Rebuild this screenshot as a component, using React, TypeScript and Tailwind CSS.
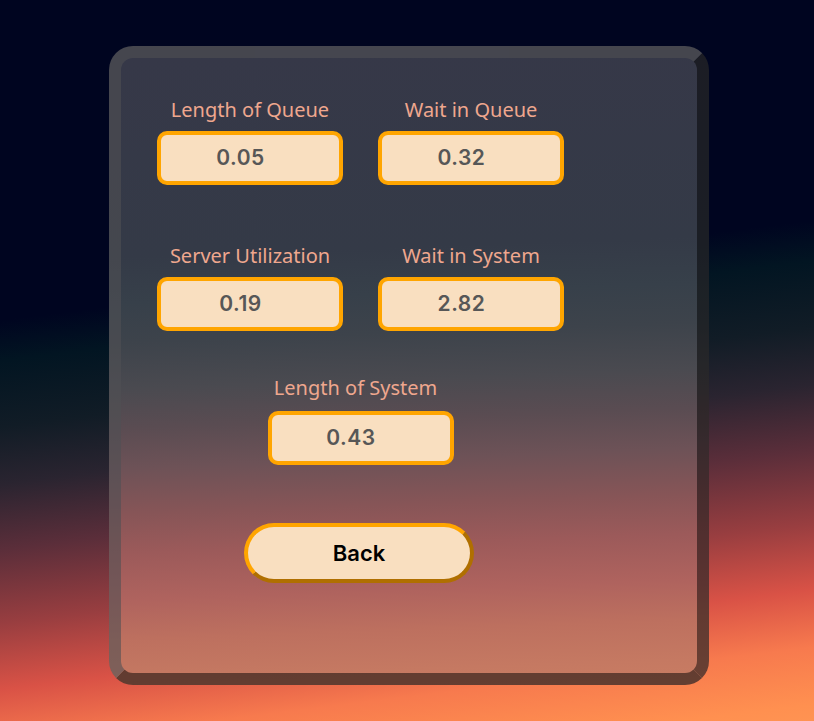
import React from "react";

const labelCls =
  "text-[20px] leading-[28px] text-[#efa78e] text-center whitespace-nowrap";
const boxCls =
  "w-[186px] h-[54px] rounded-[10px] border-[4px] border-[#ffa500] bg-[#f9dfc0] flex items-center justify-center pr-[19px] text-[21px] font-semibold tracking-[0.5px] text-[#575757]";

function Field({
  label,
  value,
  gap = "mt-[7px]",
  labelShift = "",
}: {
  label: string;
  value: string;
  gap?: string;
  labelShift?: string;
}) {
  return (
    <div className="flex flex-col items-center w-[186px]">
      <div
        className={`${labelCls} ${labelShift}`}
        style={{ fontFamily: '"Noto Sans", "Open Sans", sans-serif' }}
      >
        {label}
      </div>
      <div
        className={`${boxCls} ${gap}`}
        style={{ fontFamily: 'Inter, "Noto Sans", sans-serif' }}
      >
        {value}
      </div>
    </div>
  );
}

export default function App() {
  return (
    <div className="w-[814px] h-[721px] overflow-hidden bg-[linear-gradient(173deg,#000520_0%,#000520_39%,#021522_44%,#111c26_52%,#2a2430_59%,#5b2e3a_67%,#993e40_76%,#d95246_84%,#f77a4e_91%,#ff9050_98%,#ff9352_100%)] pt-[46px] pl-[109px]">
      <div className="w-[600px] h-[639px] rounded-[24px] border-[12px] border-t-[rgba(80,80,84,0.6)] border-l-[rgba(80,80,84,0.6)] border-r-[rgba(0,0,0,0.48)] border-b-[rgba(0,0,0,0.5)] bg-origin-border bg-[linear-gradient(178deg,#363848_0%,#363848_2%,#343a47_32%,#37404a_39%,#3d434b_45%,#4a4a50_52%,#5a4c52_58%,#6d5257_64%,#875557_71%,#9c5a5a_77%,#af635e_84%,#bd705f_90%,#c57962_96%,#c97d63_100%)] pt-[38px] pl-[36px]">
        <div className="w-[407px] flex flex-col">
          <div className="flex justify-between">
            <Field label="Length of Queue" value="0.05" />
            <Field label="Wait in Queue" value="0.32" />
          </div>
          <div className="flex justify-between mt-[57px]">
            <Field label="Server Utilization" value="0.19" />
            <Field label="Wait in System" value="2.82" />
          </div>
          <div className="flex justify-center mt-[43px]">
            <Field
              label="Length of System"
              value="0.43"
              gap="mt-[9px]"
              labelShift="pr-[10px]"
            />
          </div>
          <div className="flex mt-[58px] pl-[87px]">
            <button
              className="w-[230px] h-[60px] rounded-full border-[4px] border-t-[#ffa500] border-l-[#ffa500] border-r-[#b06f00] border-b-[#b06f00] bg-[#f9dfc0] text-[22px] font-semibold text-black"
              style={{ fontFamily: 'Inter, "Noto Sans", sans-serif' }}
            >
              Back
            </button>
          </div>
        </div>
      </div>
    </div>
  );
}
